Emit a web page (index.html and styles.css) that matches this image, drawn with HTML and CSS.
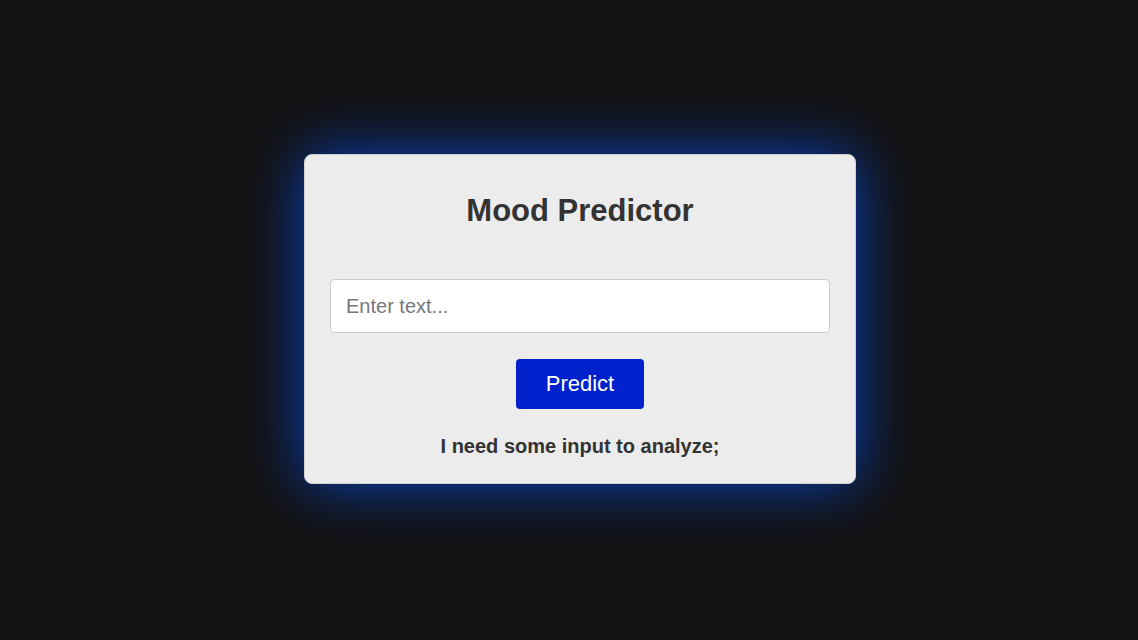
FILE: index.html
```html
<!DOCTYPE html>
<html>
<head>
<meta charset="utf-8">
<link rel="stylesheet" href="styles.css">
</head>
<body>
<div class="stage">
  <div class="card">
    <h1 class="title">Mood Predictor</h1>
    <input class="text-input" type="text" placeholder="Enter text...">
    <button class="predict">Predict</button>
    <p class="result">I need some input to analyze;</p>
  </div>
</div>
</body>
</html>
```

FILE: styles.css
```css
html, body {
  margin: 0;
  padding: 0;
  height: 100%;
  background: #131213;
  font-family: "Liberation Sans", Arial, sans-serif;
}
.stage {
  height: 100%;
  display: flex;
  align-items: center;
  justify-content: center;
  padding-left: 22px;
  padding-bottom: 2px;
  box-sizing: border-box;
}
.card {
  width: 500px;
  padding: 25px;
  background: #ececec;
  border: 1px solid #cfcfcf;
  border-radius: 8px;
  box-shadow: 0 0 60px rgba(0, 85, 255, 0.75);
  display: flex;
  flex-direction: column;
  align-items: center;
  color: #333;
}
.title {
  margin: 15px 0 0;
  font-size: 31px;
  font-weight: bold;
  line-height: 32px;
}
.text-input {
  margin-top: 52px;
  width: 100%;
  height: 54px;
  box-sizing: border-box;
  padding: 0 15px;
  border: 1px solid #cccccc;
  border-radius: 4px;
  background: #fff;
  font-family: "Liberation Sans", Arial, sans-serif;
  font-size: 20px;
  color: #333;
  outline: none;
}
.text-input::placeholder {
  color: #777;
}
.predict {
  margin-top: 26px;
  width: 128px;
  height: 50px;
  border: none;
  border-radius: 4px;
  background: #0022cc;
  color: #fff;
  font-family: "Liberation Sans", Arial, sans-serif;
  font-size: 22px;
}
.result {
  margin: 26px 0 0;
  font-size: 20px;
  font-weight: bold;
  line-height: 23px;
}
```
